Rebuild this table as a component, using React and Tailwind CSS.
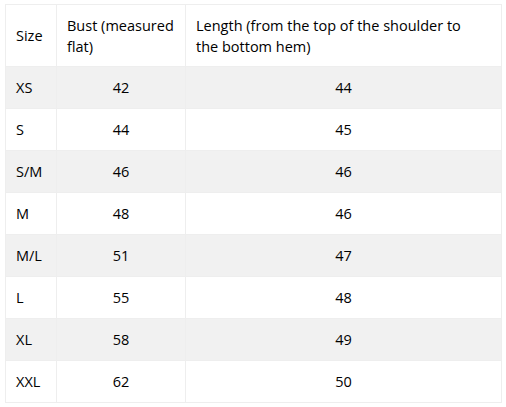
const rows = [
  ['XS', '42', '44'],
  ['S', '44', '45'],
  ['S/M', '46', '46'],
  ['M', '48', '46'],
  ['M/L', '51', '47'],
  ['L', '55', '48'],
  ['XL', '58', '49'],
  ['XXL', '62', '50'],
];

export default function App() {
  return (
    <div className="bg-white pl-[5px] pt-[4px] w-[506px] h-[407px]" style={{ fontFamily: '"Open Sans", "Noto Sans", sans-serif' }}>
      <table className="table-fixed border-collapse w-[496px] text-[14.5px] leading-[21px] text-black">
        <colgroup>
          <col className="w-[51px]" />
          <col className="w-[129px]" />
          <col className="w-[316px]" />
        </colgroup>
        <thead>
          <tr className="bg-white h-[62px]">
            <th className="border border-[#eeeeee] px-[10px] py-0 text-left font-normal align-middle">Size</th>
            <th className="border border-[#eeeeee] px-[10px] py-0 text-left font-normal align-middle">Bust (measured flat)</th>
            <th className="border border-[#eeeeee] pl-[10px] pr-[24px] py-0 text-left font-normal align-middle">Length (from the top of the shoulder to the bottom hem)</th>
          </tr>
        </thead>
        <tbody>
          {rows.map((r, i) => (
            <tr key={r[0]} className={i % 2 === 0 ? 'bg-[#f1f1f1] h-[42px]' : 'bg-white h-[42px]'}>
              <td className="border border-[#eeeeee] px-[10px] py-0 text-left">{r[0]}</td>
              <td className="border border-[#eeeeee] px-[10px] py-0 text-center">{r[1]}</td>
              <td className="border border-[#eeeeee] px-[10px] py-0 text-center">{r[2]}</td>
            </tr>
          ))}
        </tbody>
      </table>
    </div>
  );
}
